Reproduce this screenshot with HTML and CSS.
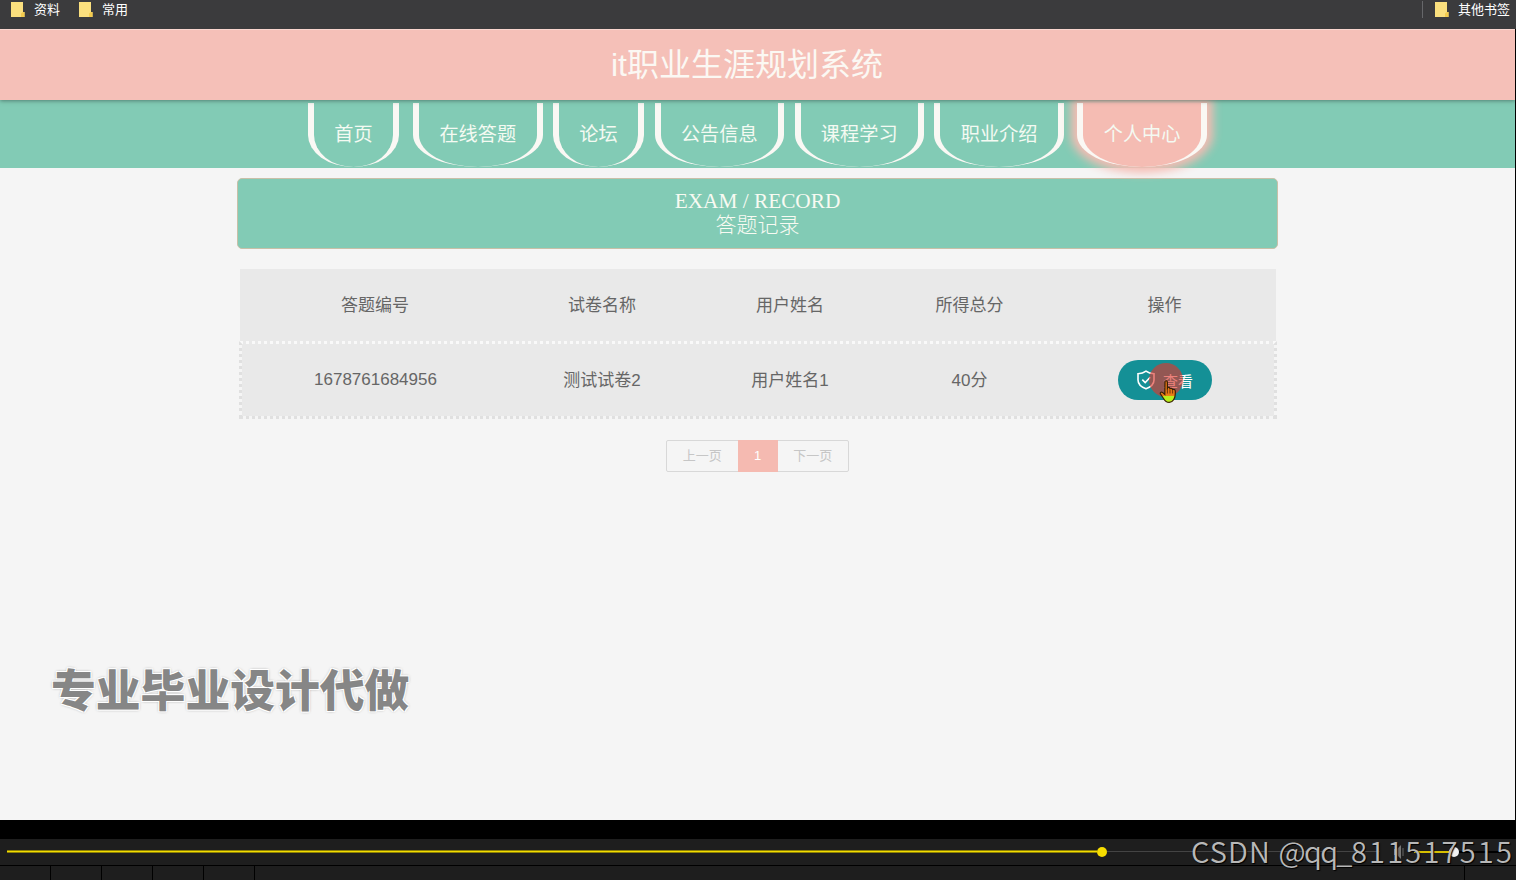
FILE: index.html
```html
<!DOCTYPE html>
<html lang="zh-CN">
<head>
<meta charset="utf-8">
<title>it职业生涯规划系统</title>
<link rel="stylesheet" href="styles.css">
</head>
<body>
<div class="screen">
  <div class="bookmarks">
    <span class="bookmark"><svg class="folder" viewBox="0 0 14 16"><path d="M0 0h12v10h1.500v5H0z" fill="#fadf7e"/><path d="M10 15v-3.500l2-1.500h1.500v5z" fill="#f3cb4e"/></svg>资料</span>
    <span class="bookmark">
      <svg class="folder" viewBox="0 0 14 16"><path d="M0 0h12v10h1.500v5H0z" fill="#fadf7e"/><path d="M10 15v-3.500l2-1.500h1.500v5z" fill="#f3cb4e"/></svg>常用</span>
    <span class="bookmark other"><svg class="folder" viewBox="0 0 14 16"><path d="M0 0h12v10h1.500v5H0z" fill="#fadf7e"/><path d="M10 15v-3.500l2-1.500h1.500v5z" fill="#f3cb4e"/></svg>其他书签</span>
  </div>
  <div class="page">
    <header class="title">it职业生涯规划系统</header>
    <nav class="nav">
      <a class="tab first">首页</a><a class="tab">在线答题</a><a class="tab">论坛</a><a class="tab">公告信息</a><a class="tab">课程学习</a><a class="tab">职业介绍</a><a class="tab active">个人中心</a>
    </nav>
    <main class="content">
      <section class="banner"><div class="banner-en">EXAM / RECORD</div><div class="banner-cn">答题记录</div></section>
      <div class="table">
        <div class="row head"><span>答题编号</span><span>试卷名称</span><span>用户姓名</span><span>所得总分</span><span>操作</span></div>
        <div class="row record"><span>1678761684956</span><span>测试试卷2</span><span>用户姓名1</span><span>40分</span>
          <span class="action"><button class="view">
            <svg class="shield" viewBox="0 0 20 20"><path d="M10 1.200C7.600 3 4.800 3.700 2 3.800V10c0 4.200 3.300 7 8 8.800 4.700-1.800 8-4.600 8-8.800V3.800C15.200 3.700 12.400 3 10 1.200z"/><path d="M6.300 9.600l2.900 2.900 5-5.200"/></svg>查看
            <i class="click"></i>
            <svg class="cursor" viewBox="0 0 20 25"><defs><linearGradient id="hand" x1="0" y1="0" x2="0" y2="1"><stop offset=".68" stop-color="#e87916"/><stop offset=".69" stop-color="#b8f01c"/></linearGradient></defs><path d="M6 2.200c1-.9 2.400-.3 2.400 1.200v7.300V8.600c1-.6 2.300-.2 2.500.9 1-.5 2.300-.1 2.600.9 1.500-.4 2.700.3 2.800 1.800.2 3.500 0 6.200-1.900 8.800-1 1.700-2.300 2.400-4.200 2.400-2.500 0-4.200-1.300-5.500-3.700L1.500 15c-.8-1.300.7-2.500 2-1.600l2.300 2z" fill="url(#hand)" stroke="#392007" stroke-width="1.200"/><path d="M8.400 10.500v4M11 10.500v4M13.600 11v3.500" stroke="#6d3409"/></svg>
          </button></span>
        </div>
      </div>
      <div class="pager"><span class="step">上一页</span><span class="current">1</span><span class="step">下一页</span></div>
    </main>
    <div class="watermark">专业毕业设计代做</div>
  </div>
  <footer class="player">
    <div class="gap"></div>
    <div class="controls">
      <div class="played"></div><div class="knob"></div><div class="remaining"></div>
      <svg class="speaker" viewBox="0 0 14 14"><path d="M1 4h3l4-4v14L4 10H1z" fill="#777"/><path d="M10 3v8" stroke="#666"/></svg>
      <div class="volume"></div><div class="knob white"></div><div class="rest"></div>
    </div>
    <div class="cells"><i></i><i></i><i></i><i></i><i></i><i class="grow"></i><b></b></div>
    <div class="credit"><span class="site">CSDN </span><span class="user">@qq_</span><span class="digits">811517515</span></div>
  </footer>
</div>
</body>
</html>
```
FILE: styles.css
```css
* { box-sizing: border-box; }
body { margin: 0; font-family: "Liberation Sans", "Noto Sans CJK SC", sans-serif; }
.screen { width: 1516px; height: 880px; overflow: hidden; display: flex; flex-direction: column; background: #000; }

.bookmarks { height: 29px; flex: none; background: #3b3b3d; color: #fff; display: flex; align-items: flex-start; padding: 0 6px 0 11px; font-size: 13px; line-height: 20px; }
.bookmark { display: flex; width: 68px; white-space: nowrap; }
.folder { width: 14px; height: 16px; margin: 2px 9px 0 0; flex: none; }
.other { position: relative; width: 87px; margin: 0 -12px 0 auto; }
.other::before { content: ""; position: absolute; left: -13px; top: 1px; width: 1px; height: 17px; background: #66676a; }

.page { position: relative; width: 1515px; height: 791px; flex: none; background: #f5f5f5; overflow: hidden; }
.title { position: relative; z-index: 2; height: 71px; background: #f5c0b8; border-top: 1px solid #f9d6cf; box-shadow: 0 1px 4px rgba(50,80,70,.6); color: #fbf8f3; font-size: 32px; line-height: 71px; text-align: center; padding-right: 21px; }
.nav { height: 68px; background: #82cbb5; display: flex; padding: 3px 0 0 308px; }
.tab { height: 64px; margin-right: 10.500px; padding: 0 20.350px; border: solid #faf8f4; border-width: 0 6px; border-radius: 0 0 50% 50%; color: #f4faf2; font-size: 19.200px; line-height: 64px; font-weight: 400; white-space: nowrap; }
.tab.first { margin-right: 14px; }
.tab.active { margin-left: 3px; background: #f5bcb3; box-shadow: 0 0 10px 6px #f5bcb3; position: relative; }

.content { width: 1041px; margin: 10px 0 0 237px; }
.banner { height: 71px; border: 1px solid #c8c0a8; border-radius: 5px; background: #82cbb5; color: #f8faf2; text-align: center; padding-top: 10px; font-size: 21px; line-height: 24px; font-weight: 300; }
.banner-en { font-family: "Liberation Serif", serif; font-weight: 400; font-size: 21.300px; }

.table { margin: 20px 1px 0 2px; color: #666; font-size: 17px; }
.row { display: grid; grid-template-columns: 266px 188px 188px 171px 219px; text-align: center; align-items: center; background: #e9e9e9; }
.head { height: 76px; margin: 0 1px 0 1px; padding: 0 0 7px 2px; }
.record { height: 78px; margin-top: -4px; padding-bottom: 4px; border: 3px dotted #e0e0e0; border-top-color: #f9f9f9; background-clip: padding-box; }
.record span:first-child { padding: 4px 0 0 1px; }
.action { padding: 4px 0 0 1px; }
.view { position: relative; display: inline-flex; align-items: center; width: 94px; height: 40px; padding: 0 0 0 18px; border: 0; border-radius: 20px; background: #149096; color: #fff; font: 15px "Liberation Sans", "Noto Sans CJK SC", sans-serif; vertical-align: middle; }
.shield { width: 20px; height: 20px; margin-right: 7px; fill: none; stroke: #fff; stroke-width: 1.600; }
.click { position: absolute; left: 31px; top: 3px; width: 34px; height: 34px; border-radius: 50%; background: rgba(226,52,42,.62); }
.cursor { position: absolute; left: 41px; top: 19px; width: 20px; height: 25px; fill: none; }

.pager { display: flex; width: 183px; height: 32px; margin: 21px 0 0 429px; border: 1px solid #d8d8d8; border-radius: 2px; font-size: 13px; line-height: 29px; text-align: center; color: #c6c6c6; }
.step { flex: 1; }
.current { width: 40px; margin: -1px 0; line-height: 32px; background: #f5bab1; color: #fff; }

.watermark { position: absolute; left: 51px; top: 626px; font: 900 44.800px/66px "Noto Sans CJK SC", sans-serif; color: #868686; white-space: nowrap; text-shadow: 1px 1px 0 #fff, -1px -1px 0 #fff, 1px -1px 0 #fff, -1px 1px 0 #fff, 0 0 3px #666; }

.player { position: relative; height: 60px; flex: none; }
.gap { height: 19px; background: #000; }
.controls { height: 27px; background: #1e1e1e; border-bottom: 1px solid #000; display: flex; align-items: center; padding: 0 8px 1px 7px; }
.controls > * { flex: none; }
.played { width: 1090px; height: 3px; background: #f3dc00; border: solid #8d8105; border-width: 1px 0; }
.knob { width: 10px; height: 10px; border-radius: 50%; background: #f6dd00; }
.remaining { width: 273px; height: 1px; background: #444; }
.speaker { width: 14px; height: 14px; margin: 0 7px 0 13px; }
.volume { width: 35px; height: 2px; background: #d6bf00; }
.knob.white { background: #f2f2f2; }
.rest { width: 48px; height: 2px; background: #000; }
.cells { height: 14px; display: flex; background: #1e1e1e; }
.cells i { width: 51px; flex: none; border-right: 1px solid #000; }
.cells .grow { width: 1210px; }
.credit { position: absolute; left: 1191px; top: 10px; font: 350 29px/40px "Noto Sans CJK SC", sans-serif; color: #b8b8b8; white-space: pre; text-shadow: 1px 1px 1px #000; }
.site { letter-spacing: 1.100px; }
.user { letter-spacing: -1.600px; }
.digits { letter-spacing: 2.200px; }
```
